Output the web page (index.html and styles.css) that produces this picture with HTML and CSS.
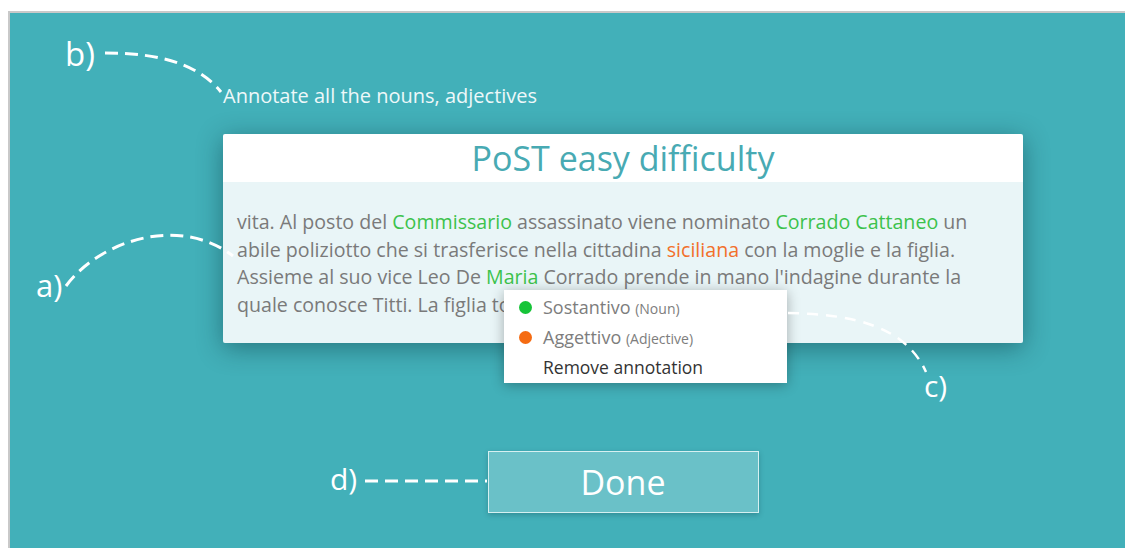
FILE: index.html
```html
<!DOCTYPE html>
<html lang="it">
<head>
<meta charset="utf-8">
<title>PoST easy difficulty</title>
<link rel="stylesheet" href="styles.css">
</head>
<body>
  <div class="stage">
    <div class="column">
      <p class="instructions">Annotate all the nouns, adjectives</p>

      <section class="card">
        <header class="card-head">PoST easy difficulty</header>
        <div class="card-body">
          <p class="passage">vita. Al posto del <span class="noun">Commissario</span> assassinato viene nominato <span class="noun">Corrado Cattaneo</span> un<br>abile poliziotto che si trasferisce nella cittadina <span class="adj">siciliana</span> con la moglie e la figlia.<br>Assieme al suo vice Leo De <span class="noun">Maria</span> Corrado prende in mano l'indagine durante la<br>quale conosce Titti. La figlia torna</p>

          <ul class="menu">
            <li class="menu-item"><span class="dot dot-noun"></span><span>Sostantivo <small>(Noun)</small></span></li>
            <li class="menu-item"><span class="dot dot-adj"></span><span>Aggettivo <small>(Adjective)</small></span></li>
            <li class="menu-item menu-remove"><span class="dot dot-none"></span><span>Remove annotation</span></li>
          </ul>
        </div>
      </section>

      <button class="done" type="button">Done</button>
    </div>
  </div>

  <div class="callouts">
    <svg class="leaders" width="1125" height="548" viewBox="0 0 1125 548">
      <path d="M105 53 C150 53 195 60 221 92"/>
      <path d="M66 286 C100 240 180 215 233 256"/>
      <path class="thin" d="M788 313 C850 314 905 325 926 372"/>
      <path d="M365 481 H487"/>
    </svg>
    <span class="tag tag-b">b)</span>
    <span class="tag tag-a">a)</span>
    <span class="tag tag-c">c)</span>
    <span class="tag tag-d">d)</span>
  </div>
</body>
</html>
```

FILE: styles.css
```css
* { box-sizing: border-box; }

html, body {
  margin: 0;
  background: #ffffff;
}

body {
  position: relative;
  width: 1125px;
  height: 548px;
  overflow: hidden;
  padding: 11px 0 0 8px;
  font-family: "Open Sans", "Noto Sans", sans-serif;
}

/* teal workspace */
.stage {
  height: 537px;
  background: #42b0b9;
  border-top: 2px solid #c9c9c9;
  border-left: 2px solid #c9c9c9;
  padding-top: 70px;
}

.column {
  width: 800px;
  margin-left: 213px;
  display: flex;
  flex-direction: column;
}

.instructions {
  margin: 0;
  font-size: 20px;
  line-height: 26px;
  color: #eef8f9;
}

/* exercise card */
.card {
  margin-top: 25px;
  position: relative;
  border-radius: 2px;
  box-shadow: 0 5px 26px rgba(0, 35, 45, 0.42);
}

.card-head {
  height: 48px;
  background: #ffffff;
  border-radius: 2px 2px 0 0;
  text-align: center;
  font-size: 34px;
  line-height: 48px;
  color: #48aab3;
}

.card-body {
  position: relative;
  background: #e9f5f7;
  padding: 26px 14px 24px;
  border-radius: 0 0 2px 2px;
}

.passage {
  margin: 0;
  font-size: 19.6px;
  line-height: 27.7px;
  color: #7a7a7a;
  white-space: nowrap;
}

.noun { color: #3cc24c; }
.adj { color: #f2702a; }

/* annotation context menu */
.menu {
  position: absolute;
  left: 281px;
  top: 108px;
  width: 283px;
  height: 93px;
  margin: 0;
  padding: 2px 0 1px;
  list-style: none;
  background: #ffffff;
  box-shadow: 0 2px 12px rgba(0, 0, 0, 0.3);
}

.menu-item {
  height: 30px;
  display: flex;
  align-items: center;
  gap: 11px;
  padding-left: 15px;
  font-size: 18px;
  color: #7d7d7d;
  white-space: nowrap;
}

.menu-item small {
  font-size: 14px;
}

.menu-remove {
  color: #333333;
  font-size: 17.5px;
}

.dot {
  width: 13px;
  height: 13px;
  border-radius: 50%;
  flex: none;
}

.dot-noun { background: #16c438; }
.dot-adj { background: #f56b12; }
.dot-none { background: transparent; }

.done {
  align-self: center;
  margin-top: 108px;
  width: 271px;
  height: 62px;
  padding: 0;
  background: #6ac1c8;
  border: 1px solid #d6f0f1;
  box-shadow: 0 2px 5px rgba(0, 40, 50, 0.25);
  font-family: inherit;
  font-size: 34px;
  color: #ffffff;
}

/* callout labels and dashed leaders drawn over the screen */
.callouts {
  position: absolute;
  left: 0;
  top: 0;
  width: 1125px;
  height: 548px;
  pointer-events: none;
}

.leaders {
  position: absolute;
  left: 0;
  top: 0;
}

.leaders path {
  fill: none;
  stroke: #ffffff;
  stroke-width: 3;
  stroke-dasharray: 13 7;
}

.leaders path.thin {
  stroke-width: 2.5;
  stroke-dasharray: 11 8;
}

.tag {
  position: absolute;
  line-height: 1;
  color: #ffffff;
}

.tag-b { left: 65px; top: 37px; font-size: 33px; }
.tag-a { left: 36px; top: 270px; font-size: 31px; }
.tag-c { left: 924px; top: 371px; font-size: 30px; }
.tag-d { left: 330px; top: 464px; font-size: 30px; }
```
